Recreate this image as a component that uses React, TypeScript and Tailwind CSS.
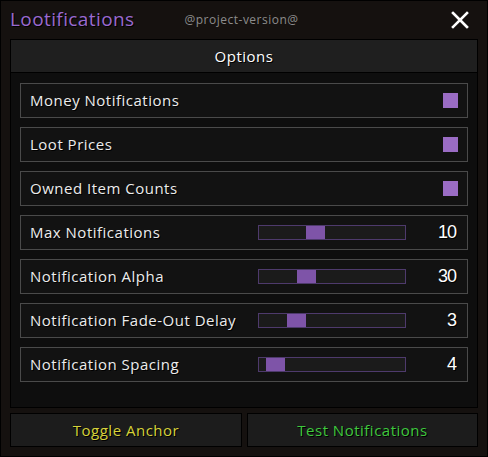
import React from "react";

const toggles = ["Money Notifications", "Loot Prices", "Owned Item Counts"];
const sliders: { label: string; value: string; pos: number }[] = [
  { label: "Max Notifications", value: "10", pos: 47 },
  { label: "Notification Alpha", value: "30", pos: 38 },
  { label: "Notification Fade-Out Delay", value: "3", pos: 28 },
  { label: "Notification Spacing", value: "4", pos: 7 },
];

const font = "font-['Open_Sans',sans-serif]";
const shadow = "[text-shadow:1px_1px_0_#000]";

export default function App() {
  return (
    <div className={`w-[488px] h-[457px] bg-[#15110f] border border-black flex flex-col ${font}`}>
      <div className="h-[38px] flex items-center pl-[9px] pr-[18px]">
        <span className={`text-[19px] text-[#9a6ad0] leading-none tracking-[0.4px] ${shadow} -mt-[2px]`}>Lootifications</span>
        <span className="text-[12px] text-[#8c8c8c] ml-[50px] tracking-[0.5px]">@project-version@</span>
        <div className="flex-1" />
        <svg width="18" height="18" viewBox="0 0 18 18">
          <path d="M2 2 L16 16 M16 2 L2 16" stroke="#ffffff" strokeWidth="2.6" strokeLinecap="square" />
        </svg>
      </div>
      <div className="mx-[9px] h-[369px] border border-black flex flex-col">
        <div className={`h-[33px] bg-[#1f1f1f] border-b border-black flex items-center justify-center text-[15px] tracking-[0.5px] text-white ${shadow}`}>
          Options
        </div>
        <div className="flex-1 bg-[#0e0e0e] px-[9px] pt-[10px] flex flex-col gap-[9px]">
          {toggles.map((t) => (
            <div key={t} className="h-[35px] border border-[#4a4a4a] bg-[#121212] flex items-center pl-[9px] pr-[9px]">
              <span className={`text-[15px] tracking-[0.5px] text-[#ececec] ${shadow} flex-1`}>{t}</span>
              <div className="w-[15px] h-[15px] bg-[#9a6cc4]" />
            </div>
          ))}
          {sliders.map((s) => (
            <div key={s.label} className="h-[35px] border border-[#4a4a4a] bg-[#121212] flex items-center pl-[9px] pr-[11px]">
              <span className={`text-[15px] tracking-[0.5px] text-[#ececec] ${shadow} flex-1`}>{s.label}</span>
              <div className="relative w-[148px] h-[15px] border border-[#4e3a6c] bg-[#1b1b1b]">
                <div className="absolute top-0 bottom-0 w-[19px] bg-[#7e54a8]" style={{ left: `${s.pos}px` }} />
              </div>
              <span className={`w-[50px] text-right font-['Liberation_Sans',sans-serif] text-[18px] text-white tracking-[-1px] ${shadow}`}>
                {s.value}
              </span>
            </div>
          ))}
        </div>
      </div>
      <div className="mx-[9px] mt-[5px] flex gap-[5px]">
        <div className={`w-[232px] h-[34px] bg-[#1c1c1c] border border-black flex items-center justify-center text-[15px] tracking-[0.5px] text-[#d6d23a] ${shadow}`}>
          Toggle Anchor
        </div>
        <div className={`flex-1 h-[34px] bg-[#1c1c1c] border border-black flex items-center justify-center text-[15px] tracking-[0.5px] text-[#3ec83e] ${shadow}`}>
          Test Notifications
        </div>
      </div>
    </div>
  );
}
